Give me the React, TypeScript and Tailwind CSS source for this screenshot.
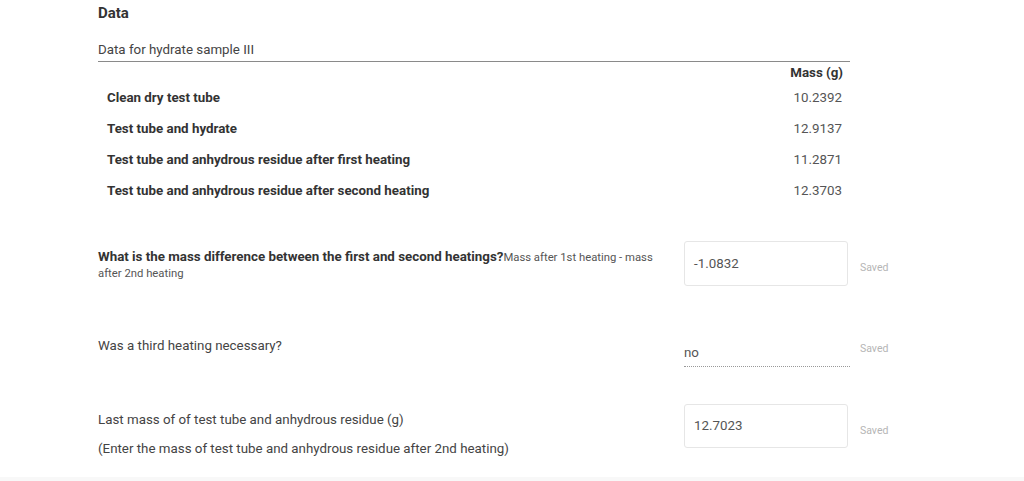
const ROWS = [
  ['Clean dry test tube', '10.2392'],
  ['Test tube and hydrate', '12.9137'],
  ['Test tube and anhydrous residue after first heating', '11.2871'],
  ['Test tube and anhydrous residue after second heating', '12.3703'],
]

function Saved({ className = '' }: { className?: string }) {
  return <span className={`ml-3 text-[10.5px] leading-[12px] text-[#b5b5b5] ${className}`}>Saved</span>
}

export default function App() {
  return (
    <div className="bg-white text-[#444]" style={{ fontFamily: 'Roboto, "Noto Sans", sans-serif' }}>
      <div className="pl-[98px] pb-[19px]">
        <h2 className="pt-[3px] text-[15px] leading-[20px] font-bold text-[#333]">Data</h2>

        {/* data table */}
        <div className="w-[752px]">
          <p className="mt-[18px] text-[13.33px] leading-[18px] pb-[2px] border-b border-[#8a8a8a]">
            Data for hydrate sample III
          </p>
          <div className="mt-[2px] flex justify-end pr-[7px] text-[13.33px] leading-[18px] font-bold text-[#333]">
            Mass (g)
          </div>
          {ROWS.map(([label, value]) => (
            <div key={label} className="h-[31px] flex items-center justify-between pl-[9px] pr-[8px] text-[13.33px] leading-[18px]">
              <span className="font-bold text-[#333]">{label}</span>
              <span className="text-[#555]">{value}</span>
            </div>
          ))}
        </div>

        {/* question 1 */}
        <div className="mt-[35px] flex">
          <div className="w-[562px] mr-[24px] pt-[8px] text-[11.3px] leading-[16px] text-[#555]">
            <span className="text-[13.33px] font-bold text-[#333]">What is the mass difference between the first and second heatings?</span>
            Mass after 1st heating - mass after 2nd heating
          </div>
          <div className="w-[164px] h-[45px] border border-[#e6e6e6] rounded-[3px] pl-[9px] flex items-center text-[13.33px] text-[#555]">
            -1.0832
          </div>
          <Saved className="pt-[21px]" />
        </div>

        {/* question 2 */}
        <div className="mt-[51px] flex">
          <div className="w-[562px] mr-[24px] text-[13.33px] leading-[18px]">Was a third heating necessary?</div>
          <div className="w-[166px] h-[30px] pt-[7px] text-[13.33px] leading-[18px] text-[#555] border-b border-dotted border-[#999]">
            no
          </div>
          <Saved className="pt-[6px] ml-[10px]" />
        </div>

        {/* question 3 */}
        <div className="mt-[37px] flex">
          <div className="w-[562px] mr-[24px] pt-[7px] text-[13.33px] leading-[18px]">
            <p>Last mass of of test tube and anhydrous residue (g)</p>
            <p className="mt-[11px]">(Enter the mass of test tube and anhydrous residue after 2nd heating)</p>
          </div>
          <div className="w-[164px] h-[44px] border border-[#e6e6e6] rounded-[3px] pl-[9px] flex items-center text-[13.33px] text-[#555]">
            12.7023
          </div>
          <Saved className="pt-[21px]" />
        </div>
      </div>
      <div className="h-[20px] bg-[#f8f8f8]" />
    </div>
  )
}
